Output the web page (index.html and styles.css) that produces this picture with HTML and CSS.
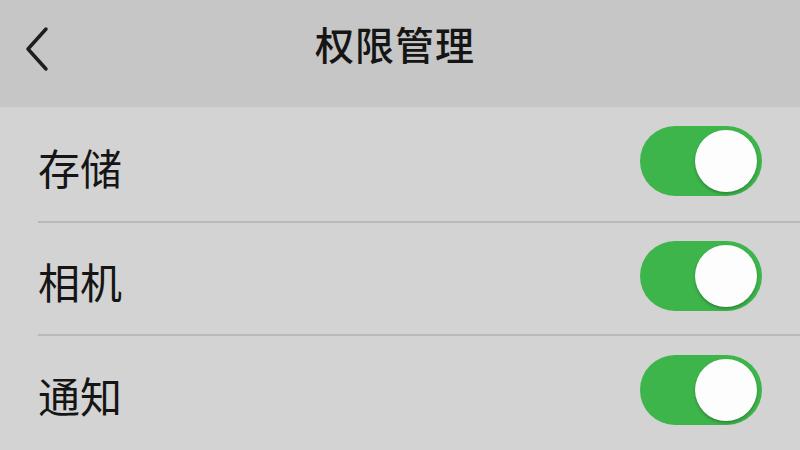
FILE: index.html
```html
<html>
    <head>
        <title>权限管理</title>
        <meta name="viewport" content="width=device-width, initial-scale=1.0">
        <link rel="stylesheet" href="styles.css">
    </head>
    <body>
    <!-- top bar -->
    <div class="top-bar">
        <svg class="back-icon" width="30" height="48" viewBox="0 0 30 48">
            <polyline points="24,4 6,24 24,44" fill="none" stroke="#1e1e1e" stroke-width="3.5" stroke-linecap="round" stroke-linejoin="round"/>
        </svg>
        <h1 class="title">权限管理</h1>
    </div>

    <!-- permission list -->
    <div class="list">
        <div class="row">
            <span class="label">存储</span>
            <div class="switch on"><div class="knob"></div></div>
        </div>
        <div class="row">
            <span class="label">相机</span>
            <div class="switch on"><div class="knob"></div></div>
        </div>
        <div class="row last">
            <span class="label">通知</span>
            <div class="switch on"><div class="knob"></div></div>
        </div>
    </div>
    </body>
</html>
```

FILE: styles.css
```css
body{
    margin: 0;
    width: 800px;
    height: 450px;
    overflow: hidden;
    background-color: #d3d3d3;
    font-family: "Noto Sans CJK SC", "Noto Sans", sans-serif;
    color: #151515;
}

.top-bar{
    height: 107px;
    background-color: #c6c6c6;
    display: flex;
    align-items: center;
    justify-content: center;
    position: relative;
    padding-bottom: 22px;
    box-sizing: border-box;
}

.back-icon{
    position: absolute;
    left: 22px;
    top: 25px;
}

.title{
    margin: 0;
    font-size: 39px;
    font-weight: 500;
    letter-spacing: 1px;
    margin-right: 10px;
}

.list{
    display: flex;
    flex-direction: column;
}

.row{
    height: 113px;
    margin-left: 38px;
    padding-right: 38px;
    border-bottom: 2px solid #b9b9b9;
    display: flex;
    align-items: center;
    justify-content: space-between;
    box-sizing: border-box;
}

.row:first-child{
    height: 116px;
}

.row.last{
    border-bottom: none;
}

.label{
    font-size: 42px;
    font-weight: 400;
    margin-top: 4px;
}

.switch{
    width: 122px;
    height: 70px;
    border-radius: 35px;
    background-color: #3db54b;
    display: flex;
    align-items: center;
    justify-content: flex-end;
    padding: 0 5px;
    box-sizing: border-box;
    margin-top: -6px;
}

.knob{
    width: 62px;
    height: 62px;
    border-radius: 50%;
    background-color: #fdfdfd;
    box-shadow: 0 2px 3px rgba(0,0,0,0.25);
}
```
